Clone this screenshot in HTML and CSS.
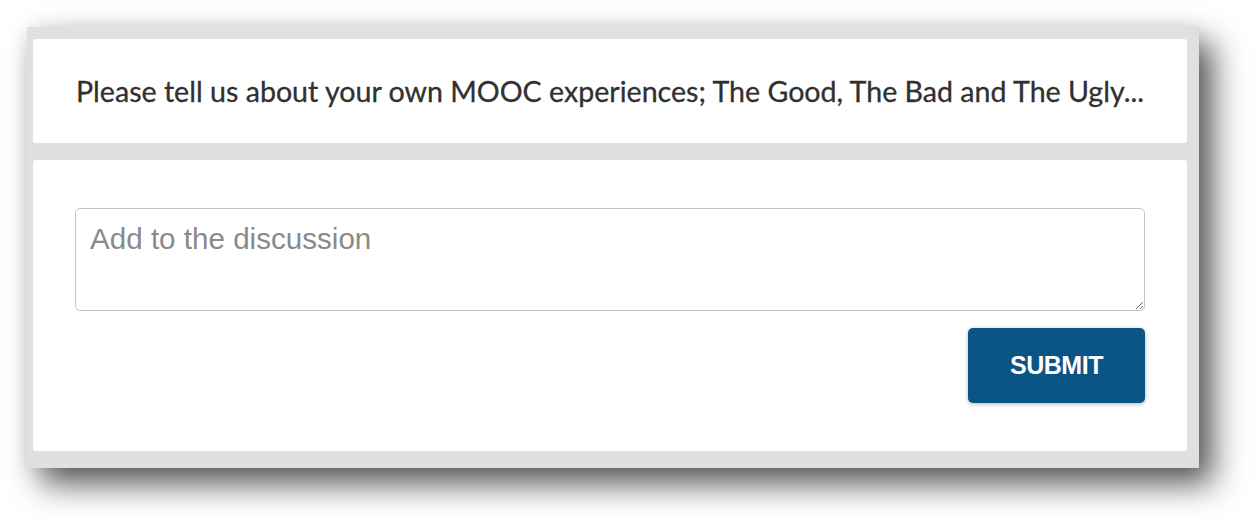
FILE: index.html
```html
<!DOCTYPE html>
<html lang="en">
<head>
    <meta charset="UTF-8">
    <title>Discussion</title>
    <link rel="stylesheet" href="styles.css">
</head>
<body>
    <div class="frame">
        <div class="card prompt">
            <p>Please tell us about your own MOOC experiences; The Good, The Bad and The Ugly...</p>
        </div>
        <div class="card reply">
            <textarea placeholder="Add to the discussion"></textarea>
            <div class="actions">
                <button type="submit">SUBMIT</button>
            </div>
        </div>
    </div>
</body>
</html>
```

FILE: styles.css
```css
html, body {
    height: 100%;
}
body {
    margin: 0;
    padding: 27px 0 0 27px;
    box-sizing: border-box;
    background: #fff;
}
.frame {
    width: 1154px;
    height: 412px;
    padding: 12px 12px 17px 6px;
    background: #e0e0e0;
    display: flex;
    flex-direction: column;
    gap: 17px;
    box-shadow: 0 0 18px rgba(0, 0, 0, 0.08), 14px 16px 30px rgba(0, 0, 0, 0.65);
}
.card {
    background: #fff;
    border-radius: 3px;
}
.prompt {
    height: 104px;
    padding: 0 43px;
    display: flex;
    align-items: center;
}
.prompt p {
    margin: 0;
    font-family: Lato, sans-serif;
    font-size: 28.6px;
    color: #303030;
    -webkit-text-stroke: 0.3px #303030;
}
.reply {
    flex: 1;
    padding: 48px 42px 0 42px;
}
textarea {
    display: block;
    width: 100%;
    height: 103px;
    box-sizing: border-box;
    padding: 13px 14px;
    border: 1px solid #c4c4c4;
    border-radius: 5px;
    font-family: "Liberation Sans", Arial, sans-serif;
    font-size: 29.6px;
    color: #333;
    resize: vertical;
}
textarea::placeholder {
    color: #8a8a8a;
}
.actions {
    display: flex;
    justify-content: flex-end;
    margin-top: 17px;
}
button {
    width: 177px;
    height: 75px;
    background-color: #0b5486;
    color: #fff;
    border: none;
    border-radius: 5px;
    font-family: "Liberation Sans", Arial, sans-serif;
    font-weight: bold;
    font-size: 25px;
    letter-spacing: -0.5px;
    box-shadow: 0 1px 4px rgba(0, 0, 0, 0.3);
    cursor: pointer;
}
```
